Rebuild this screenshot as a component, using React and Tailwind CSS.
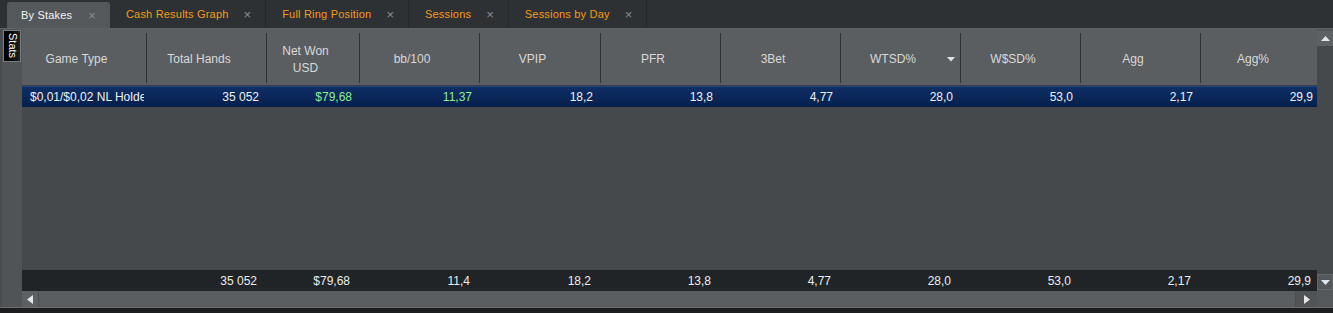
import React from "react";

const cols = [
  { w: "w-[125px]", h: "Game Type", v: "$0,01/$0,02 NL Holdem", f: "", left: true },
  { w: "w-[120px]", h: "Total Hands", v: "35 052", f: "35 052" },
  { w: "w-[93px]", h: ["Net Won", "USD"], v: "$79,68", f: "$79,68", green: true },
  { w: "w-[120px]", h: "bb/100", v: "11,37", f: "11,4", green: true },
  { w: "w-[121px]", h: "VPIP", v: "18,2", f: "18,2" },
  { w: "w-[120px]", h: "PFR", v: "13,8", f: "13,8" },
  { w: "w-[120px]", h: "3Bet", v: "4,77", f: "4,77" },
  { w: "w-[120px]", h: "WTSD%", v: "28,0", f: "28,0", sort: true },
  { w: "w-[120px]", h: "W$SD%", v: "53,0", f: "53,0" },
  { w: "w-[120px]", h: "Agg", v: "2,17", f: "2,17" },
  { w: "w-[120px]", h: "Agg%", v: "29,9", f: "29,9" },
];

const tabs = ["By Stakes", "Cash Results Graph", "Full Ring Position", "Sessions", "Sessions by Day"];

function Tab({ label, active }) {
  return (
    <div
      className={
        active
          ? "h-[26px] flex items-center pl-[14px] pr-[14px] gap-[16px] bg-[#55585b] rounded-t-[3px] text-[#f2f2f2]"
          : "h-[28px] flex items-center pl-[16px] pr-[14px] gap-[15px] border-r border-[#25282b] text-[#f39a1c]"
      }
    >
      <span className="text-[11px] leading-none tracking-[0.2px]">{label}</span>
      <span className="text-[13px] leading-none text-[#8a8d90]">×</span>
    </div>
  );
}

export default function App() {
  return (
    <div className="w-[1333px] h-[313px] bg-[#2e3134] flex flex-col font-['Liberation_Sans',sans-serif] overflow-hidden">
      {/* tabs */}
      <div className="h-[28px] flex items-end pl-[7px] shrink-0">
        {tabs.map((t, i) => (
          <Tab key={t} label={t} active={i === 0} />
        ))}
      </div>

      {/* main */}
      <div className="flex-1 flex bg-[#55585b] border-t border-[#5f6265] min-h-0">
        {/* left strip */}
        <div className="w-[22px] shrink-0 bg-[#515457] border-l-[2px] border-[#4a4d50] pt-[1px] pl-[1px]">
          <div className="w-[18px] h-[32px] bg-gradient-to-r from-[#000] to-[#202224] border border-[#7a7d80] flex items-center justify-center">
            <span className="[writing-mode:vertical-rl] text-[11px] leading-none text-white">Stats</span>
          </div>
        </div>

        {/* table */}
        <div className="flex-1 flex flex-col min-w-0">
          <div className="flex-1 flex flex-col overflow-hidden">
            {/* header */}
            <div className="h-[57px] flex bg-[#5b5e61] shrink-0 border-b border-[#3a3d40]">
              {cols.map((c, i) => (
                <div key={i} className={`${c.w} shrink-0 flex`}>
                  <div className="relative flex-1 flex items-center justify-center text-[12px] leading-[17px] text-[#d8d8d8] text-center pt-[5px] pr-[15px]">
                    {Array.isArray(c.h) ? (
                      <div className="flex flex-col">
                        <span>{c.h[0]}</span>
                        <span>{c.h[1]}</span>
                      </div>
                    ) : (
                      <span>{c.h}</span>
                    )}
                    {c.sort && (
                      <svg className="absolute right-[5px] top-[28px]" width="8" height="5" viewBox="0 0 8 5">
                        <path d="M0 0 L8 0 L4 4.5 Z" fill="#e2e2e2" />
                      </svg>
                    )}
                  </div>
                  <div className="w-px h-[50px] mt-[4px] bg-[#2f3235] shrink-0" />
                </div>
              ))}
            </div>

            {/* selected row */}
            <div className="h-[21px] flex shrink-0 bg-gradient-to-b from-[#0e2f66] to-[#061f4b] border-t border-[#25457a] text-[12px] leading-none">
              {cols.map((c, i) => (
                <div
                  key={i}
                  className={`${c.w} shrink-0 flex items-center overflow-hidden whitespace-nowrap ${
                    c.left ? "pl-[8px] pr-[3px]" : "justify-end pr-[8px]"
                  } ${c.green ? "text-[#8fee8f]" : "text-[#f0f0f0]"}`}
                >
                  <span className="overflow-hidden">{c.v}</span>
                </div>
              ))}
            </div>

            {/* empty area */}
            <div className="flex-1 bg-[#46494c]" />

            {/* footer totals */}
            <div className="h-[21px] flex shrink-0 bg-[#212427] text-[12px] leading-none text-[#ececec]">
              {cols.map((c, i) => (
                <div key={i} className={`${c.w} shrink-0 flex items-center justify-end pr-[10px] whitespace-nowrap`}>
                  {c.f}
                </div>
              ))}
            </div>
          </div>

          {/* horizontal scrollbar */}
          <div className="h-[16px] flex shrink-0 bg-[#5b5e61]">
            <div className="w-[17px] flex items-center justify-center border-r border-[#4b4e51] bg-[#5d6063]">
              <svg width="6" height="9" viewBox="0 0 6 9">
                <path d="M6 0 L6 9 L0 4.5 Z" fill="#e6e6e6" />
              </svg>
            </div>
            <div className="flex-1" />
            <div className="w-[22px] flex items-center justify-center bg-[#515457] border-l border-[#4b4e51]">
              <svg width="6" height="9" viewBox="0 0 6 9">
                <path d="M0 0 L6 4.5 L0 9 Z" fill="#e6e6e6" />
              </svg>
            </div>
          </div>
        </div>

        {/* vertical scrollbar */}
        <div className="w-[16px] shrink-0 flex flex-col bg-[#55585b]">
          <div className="h-[2px]" />
          <div className="h-[15px] flex items-center justify-center bg-[#5e6164]">
            <svg width="9" height="5" viewBox="0 0 9 5">
              <path d="M0 5 L4.5 0 L9 5 Z" fill="#e6e6e6" />
            </svg>
          </div>
          <div className="flex-1 bg-[#46494c]" />
          <div className="h-[16px] flex items-center justify-center bg-[#55585b] border border-[#65686b]">
            <svg width="9" height="5" viewBox="0 0 9 5">
              <path d="M0 0 L9 0 L4.5 5 Z" fill="#e6e6e6" />
            </svg>
          </div>
          <div className="h-[17px]" />
        </div>
      </div>

      {/* bottom */}
      <div className="h-[6px] shrink-0 bg-[#1b1d1f] border-t border-[#6a6d70]" />
    </div>
  );
}
